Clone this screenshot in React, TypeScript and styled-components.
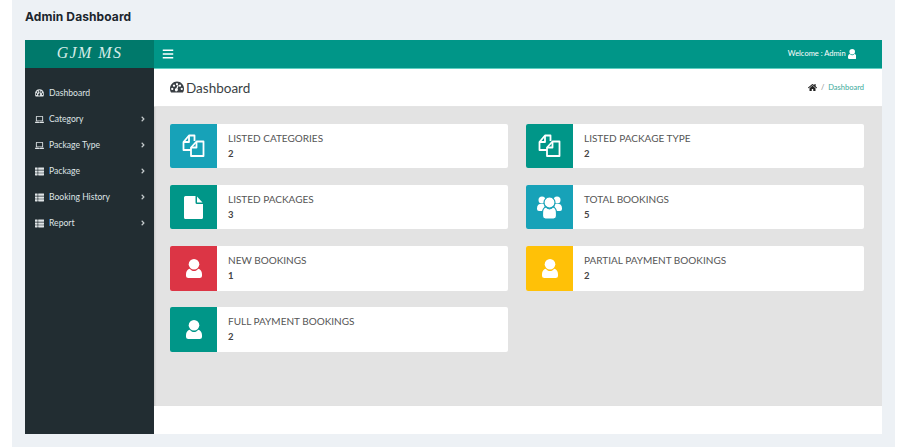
import React from 'react';
import styled, {createGlobalStyle} from 'styled-components';
import {FaAngleRight, FaBars, FaHome, FaLaptop, FaThList} from 'react-icons/fa';

const GlobalStyle = createGlobalStyle`
	html, body {
		margin: 0;
		background: #fff;
		font-family: Lato, "Liberation Sans", sans-serif;
	}
`;

const GaugeIcon = ({size}: {size: number}) => (
	<svg width={size} height={size * 0.86} viewBox="0 0 28 24" fill="currentColor" fillRule="evenodd">
		<path d="M14 1C6 1 0 7.500 0 15.500C0 18.500 .7 20.500 1.800 22.300Q2.300 23 3 23H25Q25.700 23 26.200 22.300C27.300 20.500 28 18.500 28 15.500C28 7.500 22 1 14 1ZM4.500 13.500a2.200 2.200 0 1 0 .01 0ZM8 7a2.200 2.200 0 1 0 .01 0ZM14 4a2.200 2.200 0 1 0 .01 0ZM20 7a2.200 2.200 0 1 0 .01 0ZM23.500 13.500a2.200 2.200 0 1 0 .01 0ZM15.500 8L12.600 14.600a3 3 0 1 0 2.400 .9L17.500 8.800Z" />
	</svg>
);

const UserIcon = ({size}: {size: number}) => (
	<svg width={(size * 16) / 19} height={size} viewBox="0 0 16 19" fill="currentColor">
		<circle cx="8" cy="5.300" r="5.300" />
		<path d="M0 15C0 12 1.800 10 3.800 9.700C5 11.300 6.400 12 8 12C9.600 12 11 11.300 12.200 9.700C14.200 10 16 12 16 15V16.500Q16 19 13.500 19H2.500Q0 19 0 16.500Z" />
	</svg>
);

const CopyIcon = () => (
	<svg width="23" height="23" viewBox="0 0 23 23" fill="none" stroke="#fff" strokeWidth="1.8" strokeLinejoin="round">
		<path d="M9 16H1.500V8L7 1.500H12.500V7" />
		<path d="M7 2V8H1.500" />
		<path d="M9 13.500L14.500 7.500H21.500V22H9Z" />
		<path d="M14.500 8V13.500H9" />
	</svg>
);

const FileIcon = () => (
	<svg width="19" height="23" viewBox="0 0 19 23" fill="#fff">
		<path d="M0 1.500Q0 0 1.500 0H11.500V6.500Q11.500 8 13 8H19V21.500Q19 23 17.500 23H1.500Q0 23 0 21.500Z" />
		<path d="M13 .5L18.500 6.500H13Z" />
	</svg>
);

const UsersIcon = () => (
	<svg width="25" height="23" viewBox="0 0 25 23" fill="#fff">
		<circle cx="5" cy="4" r="3.500" />
		<circle cx="20" cy="4" r="3.500" />
		<path d="M0 12.500C0 9.500 1.500 8 3 8H7.500V15H2Q0 15 0 13Z" />
		<path d="M25 12.500C25 9.500 23.500 8 22 8H17.500V15H23Q25 15 25 13Z" />
		<g stroke="#17a2b8" strokeWidth="1.200">
			<circle cx="12.500" cy="6.500" r="5.500" />
			<path d="M5.500 17C5.500 13.500 7 11.500 9 11C10 12.300 11 12.800 12.500 12.800C14 12.800 15 12.300 16 11C18 11.500 19.500 13.500 19.500 17V20Q19.500 23 16.500 23H8.500Q5.500 23 5.500 20Z" />
		</g>
	</svg>
);

const menu = [
	{label: 'Dashboard', icon: <GaugeIcon size={9} />, arrow: false},
	{label: 'Category', icon: <FaLaptop />, arrow: true},
	{label: 'Package Type', icon: <FaLaptop />, arrow: true},
	{label: 'Package', icon: <FaThList />, arrow: true},
	{label: 'Booking History', icon: <FaThList />, arrow: true},
	{label: 'Report', icon: <FaThList />, arrow: true},
];

const stats = [
	{label: 'LISTED CATEGORIES', value: 2, color: '#17a2b8', icon: <CopyIcon />},
	{label: 'LISTED PACKAGE TYPE', value: 2, color: '#009688', icon: <CopyIcon />},
	{label: 'LISTED PACKAGES', value: 3, color: '#009688', icon: <FileIcon />},
	{label: 'TOTAL BOOKINGS', value: 5, color: '#17a2b8', icon: <UsersIcon />},
	{label: 'NEW BOOKINGS', value: 1, color: '#dc3545', icon: <UserIcon size={19} />},
	{label: 'PARTIAL PAYMENT BOOKINGS', value: 2, color: '#ffc107', icon: <UserIcon size={19} />},
	{label: 'FULL PAYMENT BOOKINGS', value: 2, color: '#009688', icon: <UserIcon size={19} />},
];

const App = () => (
	<>
		<GlobalStyle />
		<Page>
			<Heading>Admin Dashboard</Heading>
			<Frame>
				<Sidebar>
					<Logo>GJM MS</Logo>
					<Menu>
						{menu.map(item => (
							<MenuItem key={item.label}>
								<MenuIcon>{item.icon}</MenuIcon>
								<MenuLabel>{item.label}</MenuLabel>
								{item.arrow && <FaAngleRight size={8} color="#c4cacc" />}
							</MenuItem>
						))}
					</Menu>
				</Sidebar>
				<Main>
					<TopBar>
						<FaBars size={12} />
						<Welcome>
							Welcome : Admin
							<UserIcon size={10} />
						</Welcome>
					</TopBar>
					<TitleBar>
						<Title>
							<GaugeIcon size={14} />
							Dashboard
						</Title>
						<Breadcrumb>
							<FaHome size={9} color="#222" />
							<Slash>/</Slash>
							<Crumb>Dashboard</Crumb>
						</Breadcrumb>
					</TitleBar>
					<Content>
						{stats.map(stat => (
							<Card key={stat.label}>
								<CardIcon $color={stat.color}>{stat.icon}</CardIcon>
								<CardText>
									<CardLabel>{stat.label}</CardLabel>
									<CardValue>{stat.value}</CardValue>
								</CardText>
							</Card>
						))}
					</Content>
					<Footer />
				</Main>
			</Frame>
		</Page>
	</>
);

export default App;

const Page = styled.div`
	box-sizing: border-box;
	width: 883px;
	height: 447px;
	margin-left: 12px;
	padding: 0 13px;
	background: #edf1f5;
	overflow: hidden;
`;

const Heading = styled.h1`
	margin: 0;
	height: 40px;
	padding-top: 9px;
	box-sizing: border-box;
	font-family: Inter, sans-serif;
	font-size: 12px;
	line-height: 15px;
	font-weight: 700;
	letter-spacing: 0.1px;
	color: #1b252d;
`;

const Frame = styled.div`
	display: grid;
	grid-template-columns: 129px 1fr;
	height: 394px;
`;

const Sidebar = styled.aside`
	display: flex;
	flex-direction: column;
	background: #222d32;
`;

const Logo = styled.div`
	height: 28px;
	line-height: 26px;
	background: #00796b;
	color: #d5ece8;
	text-align: center;
	font-family: "Liberation Serif", serif;
	font-style: italic;
	font-size: 16px;
	letter-spacing: 1.4px;
`;

const Menu = styled.nav`
	display: flex;
	flex-direction: column;
	padding-top: 12px;
`;

const MenuItem = styled.div`
	display: flex;
	align-items: center;
	height: 26px;
	padding: 0 7px 0 10px;
	color: #dfe4e6;
	font-size: 8.6px;
`;

const MenuIcon = styled.span`
	display: flex;
	justify-content: center;
	width: 9px;
	margin-right: 5px;
	font-size: 9px;
`;

const MenuLabel = styled.span`
	flex: 1;
`;

const Main = styled.main`
	display: flex;
	flex-direction: column;
	min-width: 0;
`;

const TopBar = styled.header`
	display: flex;
	align-items: center;
	justify-content: space-between;
	box-sizing: border-box;
	height: 29px;
	padding: 0 26px 1px 8px;
	background: #009688;
	border-bottom: 1px solid #5fcfc2;
	color: #fff;
`;

const Welcome = styled.div`
	display: flex;
	align-items: center;
	gap: 2px;
	font-size: 7.5px;
`;

const TitleBar = styled.div`
	display: flex;
	align-items: center;
	justify-content: space-between;
	box-sizing: border-box;
	height: 38px;
	padding: 0 18px 0 16px;
	background: #fff;
	border-bottom: 1px solid #e4e4e4;
`;

const Title = styled.h2`
	display: flex;
	align-items: center;
	gap: 2px;
	margin: 0;
	font-size: 13.5px;
	font-weight: 400;
	color: #3a3f44;
`;

const Breadcrumb = styled.div`
	display: flex;
	align-items: center;
	font-size: 7.5px;
`;

const Slash = styled.span`
	margin: 0 4px;
	color: #888;
`;

const Crumb = styled.span`
	color: #3aa99b;
`;

const Content = styled.section`
	flex: 1;
	display: grid;
	grid-template-columns: 338px 338px;
	grid-auto-rows: 44.5px;
	column-gap: 18px;
	row-gap: 16.8px;
	align-content: start;
	padding: 16.500px 18px 0 16px;
	background: #e3e3e3;
	box-shadow: inset 2px 0 2px -1px rgba(0, 0, 0, 0.12);
`;

const Card = styled.div`
	display: flex;
	background: #fff;
	border-radius: 2px;
	overflow: hidden;
`;

const CardIcon = styled.div<{$color: string}>`
	display: flex;
	align-items: center;
	justify-content: center;
	flex: 0 0 47px;
	background: ${props => props.$color};
	color: #fff;
`;

const CardText = styled.div`
	display: flex;
	flex-direction: column;
	padding: 7px 0 0 11px;
`;

const CardLabel = styled.div`
	font-size: 10px;
	line-height: 14px;
	color: #555;
`;

const CardValue = styled.div`
	margin-top: 2px;
	font-size: 9.500px;
	line-height: 14px;
	font-weight: 700;
	color: #444;
`;

const Footer = styled.footer`
	height: 28px;
	background: #fff;
`;
